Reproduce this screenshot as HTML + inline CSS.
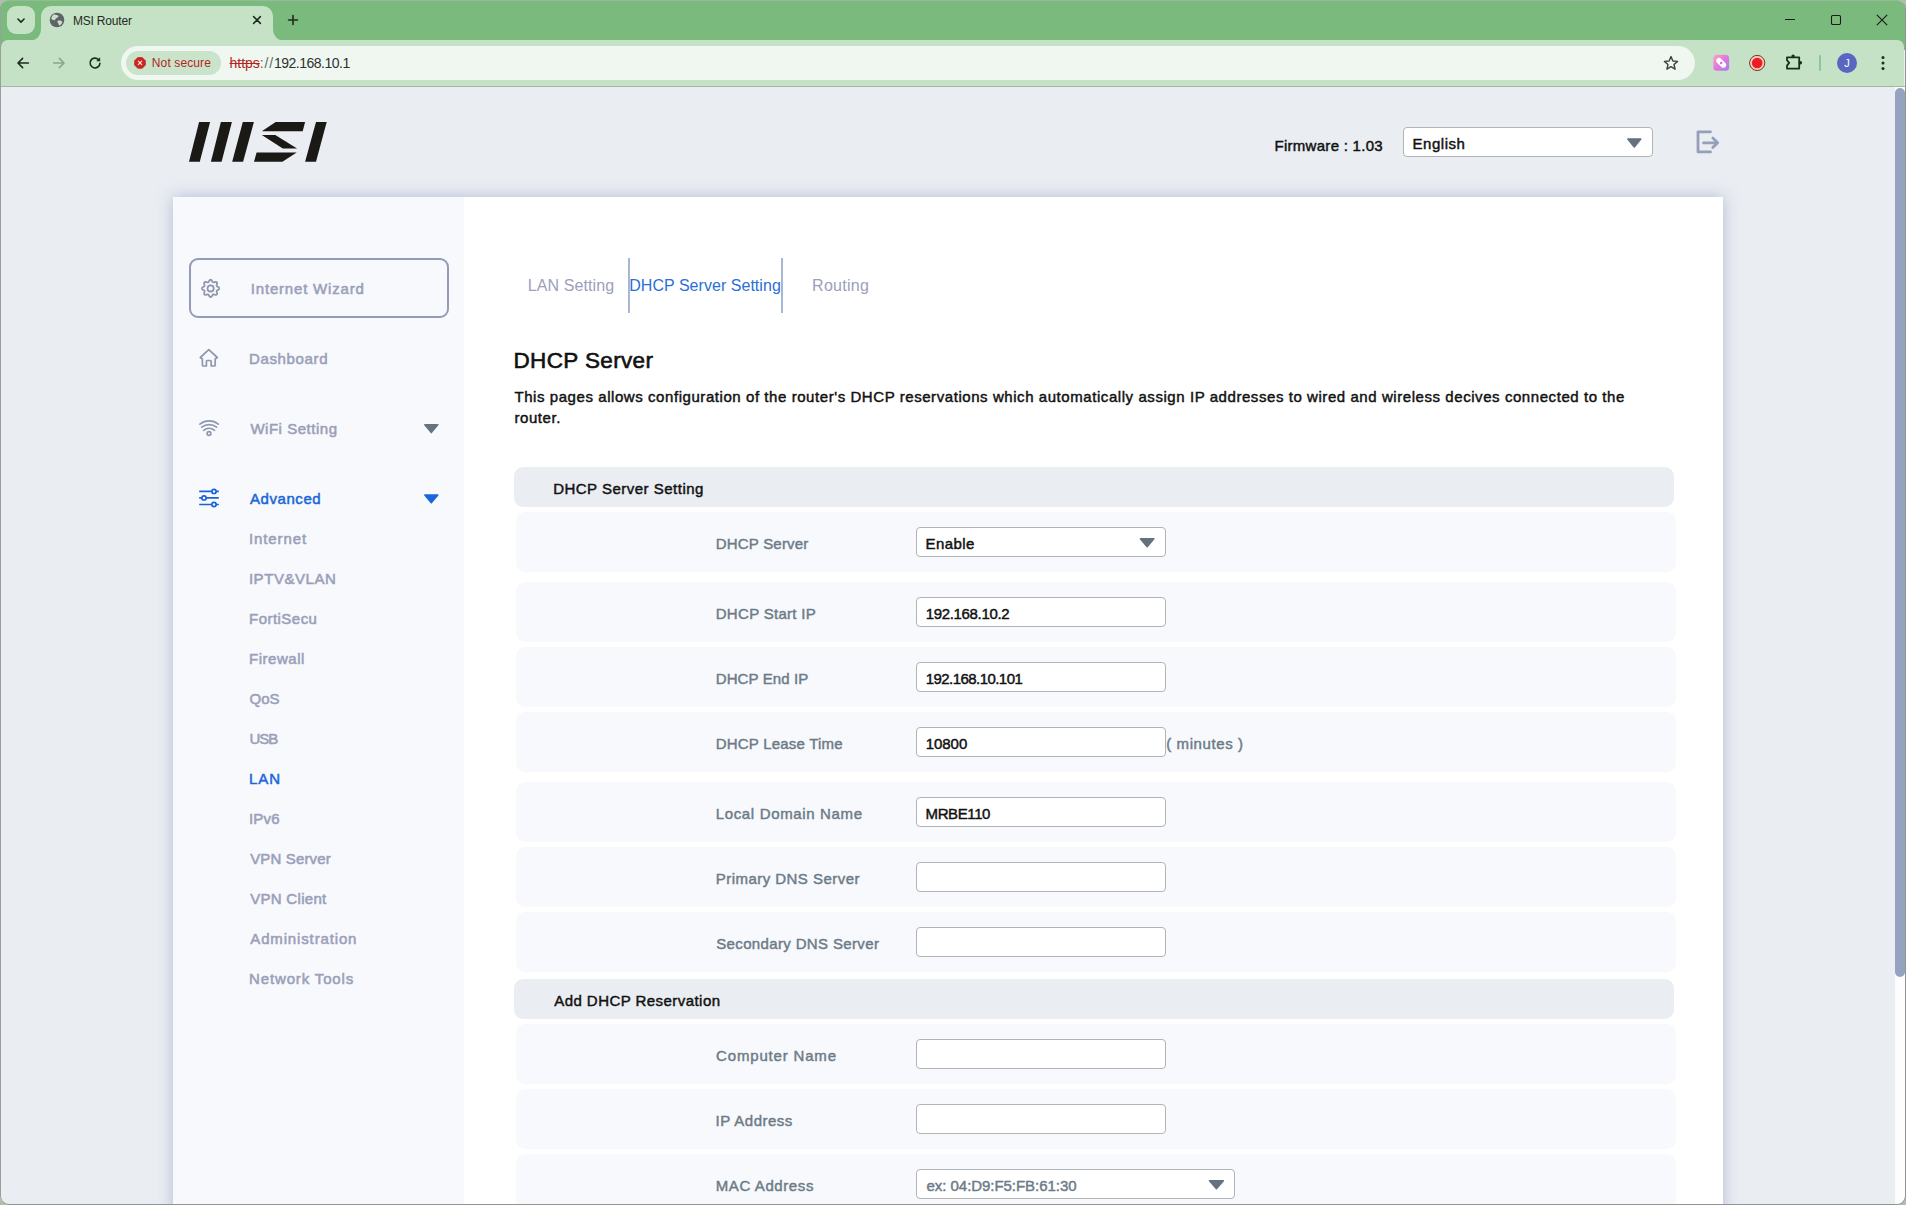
<!DOCTYPE html>
<html lang="en">
<head>
<meta charset="utf-8">
<title>MSI Router</title>
<style>
*{box-sizing:border-box;margin:0;padding:0}
html,body{width:1906px;height:1205px;overflow:hidden;background:#aebfaf}
body{font-family:"Liberation Sans",sans-serif;position:relative}
.abs,.t{position:absolute}
.t{white-space:nowrap;line-height:20px;font-size:16px}
svg{position:absolute;overflow:visible}
#win{position:absolute;left:0;top:0;width:1905px;height:1205px;overflow:hidden;border-radius:9px;background:#eaedf2}
#tabstrip{position:absolute;left:0;top:0;width:1906px;height:50px;background:#7aba7c}
#toolbar{position:absolute;left:1px;top:40px;width:1903px;height:46px;background:#c5e2c6;border-radius:7px 7px 0 0}
#tbline{position:absolute;left:0;top:86px;width:1906px;height:1px;background:#a3b9a5}
#tabsearch{position:absolute;left:7px;top:6px;width:28px;height:28px;border-radius:9px;background:#c5e2c6}
#omni{position:absolute;left:121px;top:46px;width:1574px;height:34px;border-radius:17px;background:#f0f7f0}
#chip{position:absolute;left:126.3px;top:51px;width:94.5px;height:24px;border-radius:12px;background:#c9e4ca}
#pg{position:absolute;left:1px;top:87px;width:1904px;height:1117px;background:#eaedf2;overflow:hidden}
#card{position:absolute;left:173px;top:197px;width:1550px;height:1100px;background:#fff;box-shadow:0 0 15px 0 rgba(130,150,190,.55)}
#side{position:absolute;left:173px;top:197px;width:291px;height:1100px;background:#f7f9fc}
.sb,.blue,.lbl,.blk{font-size:15px}
.sb{color:#9b9fba;-webkit-text-stroke:.55px #9b9fba}
.blue{color:#1a66d9;-webkit-text-stroke:.5px #1a66d9}
.lbl{color:#6d7b88;-webkit-text-stroke:.45px #6d7b88}
.blk{color:#111;-webkit-text-stroke:.45px #111}
.hdr{position:absolute;left:514px;width:1160px;height:40px;border-radius:9px;background:#eaedf2}
.row{position:absolute;left:516px;width:1160px;height:60px;border-radius:9px;background:#f7f9fc}
.inp{position:absolute;left:916px;width:250px;height:30px;border:1px solid #b1b4b7;border-radius:4px;background:#fff}
.tab{color:#9b9fba}
</style>
</head>
<body>
<div id="win">
  <div id="tabstrip"></div>
  <div id="toolbar"></div>
  <div id="tbline"></div>
  <div id="tabsearch"></div>
  <div id="omni"></div>
  <div id="chip"></div>
<div id="pg"></div>
<div id="card"></div>
<div id="side"></div>
  <svg id="tabshape" style="left:0;top:0" width="300" height="41" viewBox="0 0 300 41"><path d="M29,41 C36,41 41,36 41,29 L41,16 A10,10 0 0 1 51,6 L263,6 A10,10 0 0 1 273,16 L273,29 C273,36 278,41 285,41 Z" fill="#c5e2c6"/></svg>
  <!-- tab search chevron -->
  <svg style="left:17px;top:17.5px" width="8" height="6" viewBox="0 0 8 6"><path d="M0.9,1 L4,4.1 L7.1,1" fill="none" stroke="#1f2a20" stroke-width="1.6" stroke-linecap="round" stroke-linejoin="round"/></svg>
  <!-- favicon globe -->
  <svg style="left:49px;top:12px" width="16" height="16" viewBox="0 0 16 16"><circle cx="8" cy="8" r="7.3" fill="#5f6368"/><path d="M5.2,2.2 C6.5,3.2 8.6,2.6 9.4,3.8 C10,5 8.2,5.6 7.2,6.2 C6,6.9 6.6,8 5.4,8.2 C4.2,8.4 3.2,7.2 2.2,7 C2.4,4.8 3.4,3.2 5.2,2.2 Z M9.2,8.6 C10.6,8.2 12.2,8.8 13.4,9.8 C13,11.6 11.8,13 10.2,13.8 C9.6,12.8 9.8,11.8 9,11 C8.2,10.2 8.2,9 9.2,8.6 Z" fill="#c5e2c6"/></svg>
  <div class="t seg" id="tabtitle" style="left:73px;top:11px;font-size:12px;letter-spacing:-.2px;color:#1f2a20">MSI Router</div>
  <!-- tab close -->
  <svg style="left:252px;top:15.3px" width="10" height="10" viewBox="0 0 10 10"><path d="M1.6,1.6 L8.4,8.4 M8.4,1.6 L1.6,8.4" stroke="#1f2a20" stroke-width="1.5" stroke-linecap="round"/></svg>
  <!-- new tab plus -->
  <svg style="left:287px;top:14px" width="12" height="12" viewBox="0 0 12 12"><path d="M6,1.6 V10.4 M1.6,6 H10.4" stroke="#1f2a20" stroke-width="1.6" stroke-linecap="round"/></svg>
  <!-- window controls -->
  <svg style="left:1784px;top:14px" width="12" height="12" viewBox="0 0 12 12"><path d="M1,5.5 H11" stroke="#1b1b1b" stroke-width="1.2"/></svg>
  <svg style="left:1830px;top:14px" width="12" height="12" viewBox="0 0 12 12"><rect x="1.5" y="1.5" width="9" height="9" rx="1.2" fill="none" stroke="#1b1b1b" stroke-width="1.1"/></svg>
  <svg style="left:1876px;top:14px" width="12" height="12" viewBox="0 0 12 12"><path d="M0.8,0.8 L11.2,11.2 M11.2,0.8 L0.8,11.2" stroke="#1b1b1b" stroke-width="1.1"/></svg>
  <!-- nav buttons -->
  <svg style="left:15px;top:55px" width="16" height="16" viewBox="0 0 16 16"><path d="M13.4,8 H3.4 M7.6,3.4 L3,8 L7.6,12.6" fill="none" stroke="#1f2a20" stroke-width="1.6" stroke-linecap="round" stroke-linejoin="round"/></svg>
  <svg style="left:51px;top:55px" width="16" height="16" viewBox="0 0 16 16"><path d="M2.6,8 H12.6 M8.4,3.4 L13,8 L8.4,12.6" fill="none" stroke="#8aa58c" stroke-width="1.6" stroke-linecap="round" stroke-linejoin="round"/></svg>
  <svg style="left:87px;top:55px" width="16" height="16" viewBox="0 0 16 16"><path d="M12.9,8.2 A4.9,4.9 0 1 1 11.5,4.6" fill="none" stroke="#1f2a20" stroke-width="1.6" stroke-linecap="round"/><path d="M13.1,2.3 V6.2 H9.2 Z" fill="#1f2a20"/></svg>
  <!-- not secure chip -->
  <svg style="left:0;top:0" width="10" height="10"><polygon points="145.36,65.12 142.22,68.26 137.78,68.26 134.64,65.12 134.64,60.68 137.78,57.54 142.22,57.54 145.36,60.68" fill="#c8261f" stroke="#c8261f" stroke-width=".8" stroke-linejoin="round"/><path d="M138.3,61.2 L141.7,64.6 M141.7,61.2 L138.3,64.6" stroke="#fbe3df" stroke-width="1.2" stroke-linecap="round"/></svg>
  <div class="t seg" id="notsecure" style="left:151.8px;top:53px;font-size:12px;letter-spacing:.12px;color:#b3261e">Not secure</div>
  <div class="t seg" id="url" style="left:229.5px;top:53px;font-size:14px;color:#2b3330"><span style="color:#b3261e;text-decoration:line-through">https</span><span style="color:#5c6b5d;letter-spacing:.8px">://</span><span style="letter-spacing:-.5px">192.168.10.1</span></div>
  <!-- star -->
  <svg style="left:1663.3px;top:55px" width="16" height="16" viewBox="0 0 16 16"><path d="M8,1.6 L9.9,6 L14.6,6.4 L11,9.5 L12.1,14.2 L8,11.7 L3.9,14.2 L5,9.5 L1.4,6.4 L6.1,6 Z" fill="none" stroke="#3c463d" stroke-width="1.4" stroke-linejoin="round"/></svg>
  <!-- extension icons -->
  <svg style="left:0;top:0" width="10" height="10"><defs><linearGradient id="g1" x1="0" y1="0" x2="1" y2="1"><stop offset="0" stop-color="#f7a6c4"/><stop offset=".5" stop-color="#e277df"/><stop offset="1" stop-color="#a57cf2"/></linearGradient></defs><rect x="1713.3" y="54.8" width="15.8" height="16" rx="3.6" fill="url(#g1)"/><path d="M1719.1,60.7 L1723.3,64.9" stroke="#fff" stroke-width="5.6" stroke-linecap="round"/><circle cx="1721.2" cy="62.9" r="1.25" fill="#d070d8"/></svg>
  <svg style="left:0;top:0" width="10" height="10"><circle cx="1757.2" cy="62.95" r="7.6" fill="#f7cdb9" stroke="#7d2f26" stroke-width="1"/><circle cx="1757.2" cy="62.95" r="5.3" fill="#ee1c25"/></svg>
  <svg style="left:0;top:0" width="10" height="10"><path d="M1787,57.3 H1799.2 V68.6 H1787 V65.6 L1789.2,62.9 L1787,60.2 Z" fill="none" stroke="#17301b" stroke-width="1.8" stroke-linejoin="round"/><circle cx="1793.1" cy="56.1" r="1.7" fill="#17301b"/><circle cx="1800.4" cy="62.8" r="1.7" fill="#17301b"/></svg>
  <div class="abs" style="left:1819px;top:55px;width:2px;height:16px;background:#8fc592;border-radius:1px"></div>
  <div class="abs" style="left:1837px;top:53px;width:20px;height:20px;border-radius:10px;background:#5966c2"></div>
  <div class="t seg" style="left:1837px;top:53px;width:20px;text-align:center;font-size:11px;color:#fff;line-height:20px">J</div>
  <svg style="left:1880px;top:55px" width="6" height="16" viewBox="0 0 6 16"><circle cx="3" cy="2.6" r="1.5" fill="#1f2a20"/><circle cx="3" cy="8" r="1.5" fill="#1f2a20"/><circle cx="3" cy="13.4" r="1.5" fill="#1f2a20"/></svg>
<svg id="logo" role="img" aria-label="MSI logo" style="left:0;top:0" width="340" height="170" viewBox="0 0 340 170"><polygon points="199.1,122.1 210.1,122.1 199.8,161.8 189.0,161.8" fill="#1b1916"/><polygon points="220.9,122.1 231.9,122.1 221.6,161.8 210.9,161.8" fill="#1b1916"/><polygon points="242.8,122.1 253.9,122.1 243.1,161.8 232.2,161.8" fill="#1b1916"/><polygon points="261.8,131.3 275.7,122.1 305.1,122.1 302.7,131.3" fill="#1b1916"/><polygon points="261.8,135.1 275.3,135.1 297.1,148.5 282.8,148.5" fill="#1b1916"/><polygon points="256.6,152.5 296.7,152.5 282.4,161.8 254.0,161.8" fill="#1b1916"/><polygon points="316.0,122.1 326.7,122.1 316.0,161.8 305.1,161.8" fill="#1b1916"/></svg>
<div class="t blk" id="fw" style="left:1274.53px;top:136px;font-size:15px;line-height:20px;letter-spacing:0.281px;">Firmware : 1.03</div>
<div class="abs" style="left:1403px;top:127px;width:250px;height:30px;border:1px solid #b1b4b7;border-radius:4px;background:#fff"></div>
<div class="t blk" id="eng" style="left:1412.53px;top:134px;font-size:15px;line-height:20px;letter-spacing:0.540px;">English</div>
<svg style="left:0;top:0" width="10" height="10"><polygon points="1627.8,139 1640.8,139 1634.3,147" fill="#65717f" stroke="#65717f" stroke-width="1.5" stroke-linejoin="round"/></svg>
<svg style="left:0;top:0" width="10" height="10"><path d="M1710.5,131.8 H1698 V151.9 H1710.5 M1703.5,142.8 H1717.3 M1712.8,138.1 L1717.7,142.8 L1712.8,147.6" fill="none" stroke="#969fb9" stroke-width="2.8" stroke-linecap="round" stroke-linejoin="round"/></svg>
<div class="abs" style="left:189px;top:258px;width:260px;height:60px;border:2px solid #939bb8;border-radius:9px"></div>
<svg style="left:0;top:0" width="10" height="10"><path d="M210.60,279.75 L210.94,279.81 L211.26,279.98 L211.57,280.24 L211.84,280.57 L212.08,280.95 L212.30,281.33 L212.50,281.68 L212.69,281.98 L212.88,282.21 L213.11,282.35 L213.36,282.40 L213.66,282.39 L214.01,282.31 L214.40,282.20 L214.82,282.08 L215.26,281.99 L215.69,281.95 L216.09,281.97 L216.44,282.09 L216.72,282.28 L216.91,282.56 L217.03,282.91 L217.05,283.31 L217.01,283.74 L216.92,284.18 L216.80,284.60 L216.69,284.99 L216.61,285.34 L216.60,285.64 L216.65,285.89 L216.79,286.12 L217.02,286.31 L217.32,286.50 L217.67,286.70 L218.05,286.92 L218.43,287.16 L218.76,287.43 L219.02,287.74 L219.19,288.06 L219.25,288.40 L219.19,288.74 L219.02,289.06 L218.76,289.37 L218.43,289.64 L218.05,289.88 L217.67,290.10 L217.32,290.30 L217.02,290.49 L216.79,290.68 L216.65,290.91 L216.60,291.16 L216.61,291.46 L216.69,291.81 L216.80,292.20 L216.92,292.62 L217.01,293.06 L217.05,293.49 L217.03,293.89 L216.91,294.24 L216.72,294.52 L216.44,294.71 L216.09,294.83 L215.69,294.85 L215.26,294.81 L214.82,294.72 L214.40,294.60 L214.01,294.49 L213.66,294.41 L213.36,294.40 L213.11,294.45 L212.88,294.59 L212.69,294.82 L212.50,295.12 L212.30,295.47 L212.08,295.85 L211.84,296.23 L211.57,296.56 L211.26,296.82 L210.94,296.99 L210.60,297.05 L210.26,296.99 L209.94,296.82 L209.63,296.56 L209.36,296.23 L209.12,295.85 L208.90,295.47 L208.70,295.12 L208.51,294.82 L208.32,294.59 L208.09,294.45 L207.84,294.40 L207.54,294.41 L207.19,294.49 L206.80,294.60 L206.38,294.72 L205.94,294.81 L205.51,294.85 L205.11,294.83 L204.76,294.71 L204.48,294.52 L204.29,294.24 L204.17,293.89 L204.15,293.49 L204.19,293.06 L204.28,292.62 L204.40,292.20 L204.51,291.81 L204.59,291.46 L204.60,291.16 L204.55,290.91 L204.41,290.68 L204.18,290.49 L203.88,290.30 L203.53,290.10 L203.15,289.88 L202.77,289.64 L202.44,289.37 L202.18,289.06 L202.01,288.74 L201.95,288.40 L202.01,288.06 L202.18,287.74 L202.44,287.43 L202.77,287.16 L203.15,286.92 L203.53,286.70 L203.88,286.50 L204.18,286.31 L204.41,286.12 L204.55,285.89 L204.60,285.64 L204.59,285.34 L204.51,284.99 L204.40,284.60 L204.28,284.18 L204.19,283.74 L204.15,283.31 L204.17,282.91 L204.29,282.56 L204.48,282.28 L204.76,282.09 L205.11,281.97 L205.51,281.95 L205.94,281.99 L206.38,282.08 L206.80,282.20 L207.19,282.31 L207.54,282.39 L207.84,282.40 L208.09,282.35 L208.32,282.21 L208.51,281.98 L208.70,281.68 L208.90,281.33 L209.12,280.95 L209.36,280.57 L209.63,280.24 L209.94,279.98 L210.26,279.81 Z" fill="none" stroke="#8f96ae" stroke-width="1.8" stroke-linejoin="round"/><circle cx="210.6" cy="288.4" r="3.1" fill="none" stroke="#8f96ae" stroke-width="1.8"/></svg>
<div class="t sb" id="wiz" style="left:250.80px;top:279px;font-size:15px;line-height:20px;letter-spacing:0.807px;">Internet Wizard</div>
<svg style="left:0;top:0" width="10" height="10"><path d="M202.4,359 L200.3,357.5 L208.8,349.7 L217.3,357.5 L215.2,359 V365 a1,1 0 0 1 -1,1 H211.2 V361.5 a1,1 0 0 0 -1,-1 H207.4 a1,1 0 0 0 -1,1 V366 H203.4 a1,1 0 0 1 -1,-1 Z" fill="none" stroke="#8f96ae" stroke-width="1.7" stroke-linecap="round" stroke-linejoin="round"/></svg>
<div class="t sb" id="dash" style="left:249.06px;top:349px;font-size:15px;line-height:20px;letter-spacing:0.630px;">Dashboard</div>
<svg style="left:0;top:0" width="10" height="10"><path d="M199.9,424.1 A14.5,14.5 0 0 1 218.3,424.1 M201.7,427.2 A12,12 0 0 1 216.5,427.2 M203.7,430.3 A8.7,8.7 0 0 1 214.5,430.3" fill="none" stroke="#8f96ae" stroke-width="1.7" stroke-linecap="round"/><circle cx="209" cy="433.5" r="1.9" fill="none" stroke="#8f96ae" stroke-width="1.6"/></svg>
<div class="t sb" id="wifi" style="left:250.38px;top:419px;font-size:15px;line-height:20px;letter-spacing:0.523px;">WiFi Setting</div>
<svg style="left:0;top:0" width="10" height="10"><polygon points="424.8,424.8 437.8,424.8 431.3,432.6" fill="#66727f" stroke="#66727f" stroke-width="1.5" stroke-linejoin="round"/></svg>
<svg style="left:0;top:0" width="10" height="10"><g fill="none" stroke="#1a63d6" stroke-width="1.6"><path d="M199.2,491.4 H211.8 M216.2,491.4 H218.8 M199.2,497.9 H201.8 M206.2,497.9 H218.8 M199.2,504.5 H211.8 M216.2,504.5 H218.8"/><circle cx="214" cy="491.4" r="2.1" stroke-width="1.7"/><circle cx="204" cy="497.9" r="2.1" stroke-width="1.7"/><circle cx="214" cy="504.5" r="2.1" stroke-width="1.7"/></g></svg>
<div class="t blue" id="adv" style="left:250.07px;top:489px;font-size:15px;line-height:20px;letter-spacing:0.554px;">Advanced</div>
<svg style="left:0;top:0" width="10" height="10"><polygon points="424.8,495 437.8,495 431.3,502.8" fill="#1a66d9" stroke="#1a66d9" stroke-width="1.5" stroke-linejoin="round"/></svg>
<div class="t sb" id="sub0" style="left:248.88px;top:529px;font-size:15px;line-height:20px;letter-spacing:0.917px;">Internet</div>
<div class="t sb" id="sub1" style="left:248.88px;top:569px;font-size:15px;line-height:20px;letter-spacing:0.562px;">IPTV&amp;VLAN</div>
<div class="t sb" id="sub2" style="left:249.06px;top:609px;font-size:15px;line-height:20px;letter-spacing:0.464px;">FortiSecu</div>
<div class="t sb" id="sub3" style="left:249.06px;top:649px;font-size:15px;line-height:20px;letter-spacing:0.525px;">Firewall</div>
<div class="t sb" id="sub4" style="left:249.51px;top:689px;font-size:15px;line-height:20px;letter-spacing:-0.014px;">QoS</div>
<div class="t sb" id="sub5" style="left:249.40px;top:729px;font-size:15px;line-height:20px;letter-spacing:-1.024px;">USB</div>
<div class="t blue" id="sub6" style="left:249.01px;top:769px;font-size:15px;line-height:20px;letter-spacing:0.971px;">LAN</div>
<div class="t sb" id="sub7" style="left:248.88px;top:809px;font-size:15px;line-height:20px;letter-spacing:0.273px;">IPv6</div>
<div class="t sb" id="sub8" style="left:250.19px;top:849px;font-size:15px;line-height:20px;letter-spacing:0.148px;">VPN Server</div>
<div class="t sb" id="sub9" style="left:250.19px;top:889px;font-size:15px;line-height:20px;letter-spacing:0.294px;">VPN Client</div>
<div class="t sb" id="sub10" style="left:250.27px;top:929px;font-size:15px;line-height:20px;letter-spacing:0.857px;">Administration</div>
<div class="t sb" id="sub11" style="left:249.06px;top:969px;font-size:15px;line-height:20px;letter-spacing:0.855px;">Network Tools</div>
<div class="t tab" id="tab1" style="left:527.74px;top:276px;font-size:16px;line-height:20px;letter-spacing:0.095px;">LAN Setting</div>
<div class="abs" style="left:628px;top:258px;width:2px;height:55px;background:#a9b7d6"></div>
<div class="t tab" id="tab2" style="left:629.22px;top:276px;font-size:16px;line-height:20px;letter-spacing:0.038px;color:#2a6fd6">DHCP Server Setting</div>
<div class="abs" style="left:781px;top:258px;width:2px;height:55px;background:#a9b7d6"></div>
<div class="t tab" id="tab3" style="left:812.05px;top:276px;font-size:16px;line-height:20px;letter-spacing:0.279px;">Routing</div>
<div class="t blk" id="h1" style="left:513.52px;top:346px;font-size:22.5px;line-height:30px;letter-spacing:0.360px;-webkit-text-stroke:.6px #111">DHCP Server</div>
<div class="t blk" id="desc" style="left:514.47px;top:386px;font-size:15px;line-height:21px;letter-spacing:0.565px;">This pages allows configuration of the router's DHCP reservations which automatically assign IP addresses to wired and wireless decives connected to the<br>router.</div>
<div class="hdr" style="top:467px"></div>
<div class="t blk" id="sh1" style="left:553.14px;top:479px;font-size:15px;line-height:20px;letter-spacing:0.490px;">DHCP Server Setting</div>
<div class="row" style="top:512px"></div>
<div class="t lbl" id="r1" style="left:715.72px;top:534px;font-size:15px;line-height:20px;letter-spacing:0.202px;">DHCP Server</div>
<div class="inp" style="top:527px"></div>
<svg style="left:0;top:0" width="10" height="10"><polygon points="1140.4,538.8 1153.9,538.8 1147.15,546.8" fill="#65717f" stroke="#65717f" stroke-width="1.5" stroke-linejoin="round"/></svg>
<div class="t blk" id="r1v" style="left:925.53px;top:534px;font-size:15px;line-height:20px;letter-spacing:0.401px;">Enable</div>
<div class="row" style="top:582px"></div>
<div class="t lbl" id="r2" style="left:715.72px;top:604px;font-size:15px;line-height:20px;letter-spacing:0.304px;">DHCP Start IP</div>
<div class="inp" style="top:597px"></div>
<div class="t blk" id="r2v" style="left:925.73px;top:604px;font-size:15px;line-height:20px;letter-spacing:-0.336px;">192.168.10.2</div>
<div class="row" style="top:647px"></div>
<div class="t lbl" id="r3" style="left:715.72px;top:669px;font-size:15px;line-height:20px;letter-spacing:0.103px;">DHCP End IP</div>
<div class="inp" style="top:662px"></div>
<div class="t blk" id="r3v" style="left:925.73px;top:669px;font-size:15px;line-height:20px;letter-spacing:-0.556px;">192.168.10.101</div>
<div class="row" style="top:712px"></div>
<div class="t lbl" id="r4" style="left:715.72px;top:734px;font-size:15px;line-height:20px;letter-spacing:0.206px;">DHCP Lease Time</div>
<div class="inp" style="top:727px"></div>
<div class="t blk" id="r4v" style="left:925.73px;top:734px;font-size:15px;line-height:20px;letter-spacing:-0.045px;">10800</div>
<div class="t lbl" id="mins" style="left:1166.29px;top:734px;font-size:15px;line-height:20px;letter-spacing:0.586px;">( minutes )</div>
<div class="row" style="top:782px"></div>
<div class="t lbl" id="r5" style="left:715.72px;top:804px;font-size:15px;line-height:20px;letter-spacing:0.653px;">Local Domain Name</div>
<div class="inp" style="top:797px"></div>
<div class="t blk" id="r5v" style="left:925.55px;top:804px;font-size:15px;line-height:20px;letter-spacing:-0.394px;">MRBE110</div>
<div class="row" style="top:847px"></div>
<div class="t lbl" id="r6" style="left:715.72px;top:869px;font-size:15px;line-height:20px;letter-spacing:0.463px;">Primary DNS Server</div>
<div class="inp" style="top:862px"></div>
<div class="row" style="top:912px"></div>
<div class="t lbl" id="r7" style="left:716.23px;top:934px;font-size:15px;line-height:20px;letter-spacing:0.358px;">Secondary DNS Server</div>
<div class="inp" style="top:927px"></div>
<div class="hdr" style="top:979px"></div>
<div class="t blk" id="sh2" style="left:554.21px;top:991px;font-size:15px;line-height:20px;letter-spacing:0.448px;">Add DHCP Reservation</div>
<div class="row" style="top:1024px"></div>
<div class="t lbl" id="r8" style="left:716.08px;top:1046px;font-size:15px;line-height:20px;letter-spacing:0.823px;">Computer Name</div>
<div class="inp" style="top:1039px"></div>
<div class="row" style="top:1089px"></div>
<div class="t lbl" id="r9" style="left:715.56px;top:1111px;font-size:15px;line-height:20px;letter-spacing:0.502px;">IP Address</div>
<div class="inp" style="top:1104px"></div>
<div class="row" style="top:1154px"></div>
<div class="t lbl" id="r10" style="left:715.72px;top:1176px;font-size:15px;line-height:20px;letter-spacing:0.596px;">MAC Address</div>
<div class="inp" style="top:1169px;width:319px"></div>
<svg style="left:0;top:0" width="10" height="10"><polygon points="1209.5,1180.8 1223.4,1180.8 1216.45,1188.8" fill="#65717f" stroke="#65717f" stroke-width="1.5" stroke-linejoin="round"/></svg>
<div class="t lbl" id="r10v" style="left:926.57px;top:1176px;font-size:15px;line-height:20px;letter-spacing:-0.048px;">ex: 04:D9:F5:FB:61:30</div>
<div class="abs" style="left:1895px;top:87px;width:10px;height:1117px;background:#fdfdfe"></div>
<div class="abs" style="left:1895px;top:88px;width:10px;height:889px;border-radius:5px;background:#96a3c0"></div>
</div>
<div class="abs" style="left:0;top:0;width:1906px;height:1205px;border-radius:9px;border-left:1px solid #9aa19b;border-bottom:1px solid #8f9490;border-top:1px solid #98b89a;border-right:1px solid #8f9592;pointer-events:none"></div>
</body>
</html>
